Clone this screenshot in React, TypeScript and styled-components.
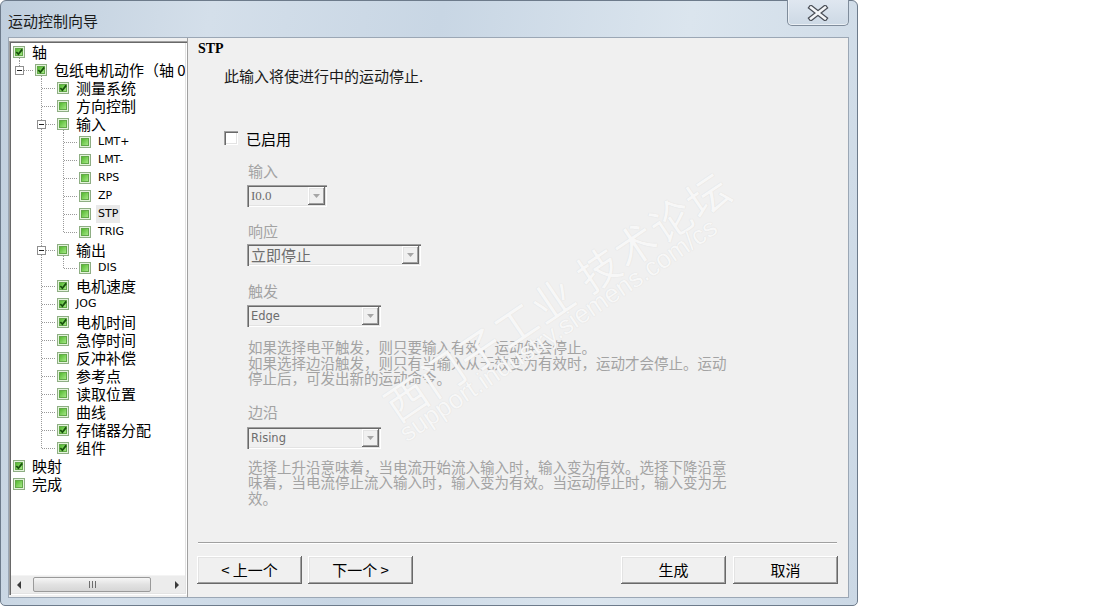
import React from "react";
import styled, { createGlobalStyle } from "styled-components";

const CJK = `"Noto Sans CJK SC", "Liberation Sans", sans-serif`;
const LATIN = `"DejaVu Sans", "Liberation Sans", sans-serif`;

const GlobalStyle = createGlobalStyle`
  html, body { margin: 0; padding: 0; background: #ffffff; }
  body { font-family: ${CJK}; }
  #root { width: 1119px; height: 607px; }
`;

const Page = styled.div`
  width: 1119px;
  height: 607px;
  background: #ffffff;
  display: flex;
  align-items: flex-start;
`;

const Window = styled.div`
  width: 858px;
  height: 606px;
  box-sizing: border-box;
  border: 1px solid #6d7b8b;
  border-radius: 6px 6px 5px 5px;
  background: linear-gradient(100deg, #bfcedd 0%, #d4dfea 22%, #c8d6e4 46%, #dbe5ee 72%, #cbd8e5 100%);
  display: flex;
  flex-direction: column;
  padding: 0 8px 7px 7px;
`;

const TitleBar = styled.div`
  height: 36px;
  display: flex;
  align-items: flex-start;
  flex: none;
`;

const Title = styled.div`
  height: 36px;
  display: flex;
  align-items: center;
  padding-top: 1px;
  font-family: ${CJK};
  font-size: 15px;
  color: #1a1a1a;
`;

const CloseButton = styled.div`
  margin-left: auto;
  margin-top: -1px;
  width: 62px;
  height: 26px;
  box-sizing: border-box;
  border: 1px solid #7f8c9b;
  border-top: none;
  border-radius: 0 0 5px 5px;
  background: linear-gradient(#dfe7f0, #cdd9e5);
  box-shadow: inset 0 -1px 0 rgba(255, 255, 255, 0.6), inset 1px 0 0 rgba(255, 255, 255, 0.5);
  display: flex;
  align-items: center;
  justify-content: center;
`;

const Client = styled.div`
  flex: 1;
  display: flex;
  box-sizing: border-box;
  border: 1px solid #9ba7b5;
  background: #f0f0f0;
  min-height: 0;
`;

const Tree = styled.div`
  width: 178px;
  flex: none;
  box-sizing: border-box;
  margin: 3px 0 2px 0;
  padding: 2px 2px 2px 2px;
  background: #ffffff;
  box-shadow: inset 1px 1px #a0a0a0, inset 2px 2px #696969, inset -1px -1px #ffffff, inset -2px -2px #e3e3e3;
  display: flex;
  flex-direction: column;
  overflow: hidden;
`;

const TreeBody = styled.div`
  flex: 1;
  overflow: hidden;
`;

const Row = styled.div`
  height: 18px;
  display: flex;
  align-items: flex-start;
  white-space: nowrap;
`;

const GuideSvg = styled.svg`
  flex: none;
  display: block;
`;

const NodeLabel = styled.span<{ $latin?: boolean; $selected?: boolean }>`
  height: 18px;
  line-height: 17px;
  font-family: ${(p) => (p.$latin ? LATIN : CJK)};
  font-size: ${(p) => (p.$latin ? "11px" : "15px")};
  color: #000;
  padding: 0 ${(p) => (p.$selected ? "2px" : "0")};
  margin-left: ${(p) => (p.$selected ? "5px" : "7px")};
  background: ${(p) => (p.$selected ? "#e9e9e9" : "transparent")};
`;

const HScroll = styled.div`
  height: 17px;
  flex: none;
  display: flex;
  background: #ececec;
  border-top: 1px solid #f4f4f4;
`;

const ScrollArrow = styled.div`
  width: 17px;
  height: 17px;
  display: flex;
  align-items: center;
  justify-content: center;
  flex: none;
`;

const ScrollTrack = styled.div`
  flex: 1;
  display: flex;
  align-items: center;
`;

const Thumb = styled.div<{ $offset: number; $width: number }>`
  margin-left: ${(p) => p.$offset}px;
  width: ${(p) => p.$width}px;
  height: 15px;
  box-sizing: border-box;
  border: 1px solid #9a9a9a;
  border-radius: 2px;
  background: linear-gradient(#f6f6f6, #e2e2e2 50%, #d6d6d6);
  display: flex;
  align-items: center;
  justify-content: center;
`;

const RightPane = styled.div`
  flex: 1;
  position: relative;
  border-left: 1px solid #a0a0a0;
  display: flex;
  flex-direction: column;
  padding: 3px 11px 0 10px;
  overflow: hidden;
`;

const PageHeader = styled.div`
  font-family: "Liberation Serif", serif;
  font-weight: bold;
  font-size: 14px;
  line-height: 16px;
  color: #000;
`;

const Description = styled.div`
  margin: 10px 0 0 26px;
  font-family: ${CJK};
  font-size: 15px;
  line-height: 18px;
  color: #1a1a1a;
`;

const CheckRow = styled.label`
  margin: 44px 0 0 26px;
  height: 18px;
  display: flex;
  align-items: center;
  gap: 8px;
  font-family: ${CJK};
  font-size: 15px;
  color: #000;
`;

const CheckBox = styled.span`
  width: 14px;
  height: 14px;
  box-sizing: border-box;
  background: #ffffff;
  box-shadow: inset 1px 1px #a0a0a0, inset 2px 2px #696969, inset -1px -1px #ffffff, inset -2px -2px #e3e3e3;
`;

const Fields = styled.div`
  margin-left: 49px;
  display: flex;
  flex-direction: column;
  align-items: flex-start;
`;

const FieldLabel = styled.div<{ $mt: number }>`
  margin: ${(p) => p.$mt}px 0 0 1px;
  font-family: ${CJK};
  font-size: 15px;
  line-height: 18px;
  color: #a3a3a3;
`;

const Combo = styled.div<{ $w: number; $mt: number }>`
  margin-top: ${(p) => p.$mt}px;
  width: ${(p) => p.$w}px;
  height: 22px;
  box-sizing: border-box;
  background: #f0f0f0;
  box-shadow: inset 1px 1px #a0a0a0, inset 2px 2px #696969, inset -1px -1px #ffffff, inset -2px -2px #e3e3e3;
  display: flex;
  align-items: center;
  padding: 2px 2px 2px 4px;
`;

const ComboText = styled.span<{ $kind: "serif" | "sans" | "cjk" }>`
  font-family: ${(p) =>
    p.$kind === "serif" ? `"Liberation Serif", serif` : p.$kind === "sans" ? LATIN : CJK};
  font-size: ${(p) => (p.$kind === "serif" ? "13px" : p.$kind === "sans" ? "11.5px" : "15px")};
  color: #6d6d6d;
  line-height: 18px;
`;

const ComboButton = styled.span`
  margin-left: auto;
  width: 17px;
  height: 18px;
  box-sizing: border-box;
  background: #f0f0f0;
  box-shadow: inset -1px -1px #696969, inset 1px 1px #ffffff, inset -2px -2px #a0a0a0, inset 2px 2px #e3e3e3;
  display: flex;
  align-items: center;
  justify-content: center;
`;

const Note = styled.div<{ $mt: number }>`
  margin: ${(p) => p.$mt}px 0 0 1px;
  font-family: ${CJK};
  font-size: 14.5px;
  line-height: 15.5px;
  color: #a3a3a3;
  white-space: nowrap;
`;

const Separator = styled.div`
  margin-top: auto;
  height: 0;
  border-top: 1px solid #a0a0a0;
  border-bottom: 1px solid #ffffff;
`;

const ButtonRow = styled.div`
  margin: 12px -1px 13px -1px;
  display: flex;
  justify-content: space-between;
`;

const ButtonGroup = styled.div<{ $gap: number }>`
  display: flex;
  gap: ${(p) => p.$gap}px;
`;

const Button = styled.button`
  width: 105px;
  height: 28px;
  box-sizing: border-box;
  border: none;
  padding: 0;
  background: #f0f0f0;
  box-shadow: inset -1px -1px #696969, inset 1px 1px #ffffff, inset -2px -2px #a0a0a0, inset 2px 2px #e3e3e3;
  font-family: ${CJK};
  font-size: 15px;
  color: #000;
  line-height: 26px;
`;

const Watermark = styled.div<{ $size: number; $angle: number }>`
  position: absolute;
  white-space: nowrap;
  pointer-events: none;
  transform-origin: 0 50%;
  transform: rotate(${(p) => p.$angle}deg);
  font-size: ${(p) => p.$size}px;
  line-height: ${(p) => p.$size}px;
  color: #f7f7f7;
  text-shadow: 0 0 1px #d6d6d6;
`;

const WatermarkCJK = styled(Watermark)`
  font-family: ${CJK};
  letter-spacing: 2px;
`;

const WatermarkURL = styled(Watermark)`
  font-family: "Liberation Sans", sans-serif;
`;

type Guide = "none" | "pipe" | "tee" | "ell";

interface TreeNode {
  label: string;
  checked?: boolean;
  guides: Guide[];
  expander?: boolean;
  parent?: boolean;
  latin?: boolean;
  selected?: boolean;
}

const T2: Guide[] = ["none", "tee"];
const E2: Guide[] = ["none", "ell"];
const T3: Guide[] = ["none", "pipe", "tee"];
const E3: Guide[] = ["none", "pipe", "ell"];

const nodes: TreeNode[] = [
  { label: "轴", checked: true, guides: [], parent: true },
  { label: "包纸电机动作（轴 0）", checked: true, guides: ["ell"], expander: true, parent: true },
  { label: "测量系统", checked: true, guides: T2 },
  { label: "方向控制", guides: T2 },
  { label: "输入", guides: T2, expander: true, parent: true },
  { label: "LMT+", guides: T3, latin: true },
  { label: "LMT-", guides: T3, latin: true },
  { label: "RPS", guides: T3, latin: true },
  { label: "ZP", guides: T3, latin: true },
  { label: "STP", guides: T3, latin: true, selected: true },
  { label: "TRIG", guides: E3, latin: true },
  { label: "输出", guides: T2, expander: true, parent: true },
  { label: "DIS", guides: E3, latin: true },
  { label: "电机速度", checked: true, guides: T2 },
  { label: "JOG", checked: true, guides: T2, latin: true },
  { label: "电机时间", checked: true, guides: T2 },
  { label: "急停时间", guides: T2 },
  { label: "反冲补偿", guides: T2 },
  { label: "参考点", guides: T2 },
  { label: "读取位置", guides: T2 },
  { label: "曲线", guides: T2 },
  { label: "存储器分配", checked: true, guides: T2 },
  { label: "组件", checked: true, guides: E2 },
  { label: "映射", checked: true, guides: [] },
  { label: "完成", guides: [] },
];

const DOT = "#9a9a9a";

function GuideCell({ kind, expander }: { kind: Guide; expander?: boolean }) {
  return (
    <GuideSvg width={22} height={18} viewBox="0 0 22 18" shapeRendering="crispEdges">
      {(kind === "pipe" || kind === "tee") && (
        <line x1={8.5} y1={0} x2={8.5} y2={18} stroke={DOT} strokeDasharray="1 1" />
      )}
      {kind === "ell" && <line x1={8.5} y1={0} x2={8.5} y2={10} stroke={DOT} strokeDasharray="1 1" />}
      {(kind === "tee" || kind === "ell") && (
        <line x1={9} y1={9.5} x2={22} y2={9.5} stroke={DOT} strokeDasharray="1 1" />
      )}
      {expander && (
        <g>
          <rect x={4.5} y={5.5} width={8} height={8} fill="#ffffff" stroke="#8f8f8f" />
          <line x1={6} y1={9.5} x2={11} y2={9.5} stroke="#222" />
        </g>
      )}
    </GuideSvg>
  );
}

function NodeIcon({ checked, parent }: { checked?: boolean; parent?: boolean }) {
  return (
    <GuideSvg width={14} height={18} viewBox="0 0 14 18" style={{ marginLeft: 2, marginRight: -2 }}>
      <defs>
        <linearGradient id="ng" x1="0" y1="0" x2="1" y2="1">
          <stop offset="0" stopColor="#4fb52a" />
          <stop offset="1" stopColor="#a9eb8b" />
        </linearGradient>
      </defs>
      {parent && (
        <line x1={6.5} y1={15} x2={6.5} y2={18} stroke={DOT} strokeDasharray="1 1" shapeRendering="crispEdges" />
      )}
      <rect x={0.5} y={3.5} width={11} height={11} fill="#e4f3dc" stroke="#8fae84" shapeRendering="crispEdges" />
      <rect x={2.5} y={5.5} width={7} height={7} fill="url(#ng)" stroke="#62a848" shapeRendering="crispEdges" />
      {checked && (
        <path d="M3.3 9 L5.4 11.2 L9.2 6.4" fill="none" stroke="#17510c" strokeWidth={1.8} />
      )}
    </GuideSvg>
  );
}

function TreeRow({ node }: { node: TreeNode }) {
  const last = node.guides.length - 1;
  return (
    <Row>
      {node.guides.map((g, i) => (
        <GuideCell key={i} kind={g} expander={node.expander && i === last} />
      ))}
      <NodeIcon checked={node.checked} parent={node.parent} />
      <NodeLabel $latin={node.latin} $selected={node.selected}>
        {node.label}
      </NodeLabel>
    </Row>
  );
}

function ArrowIcon({ dir }: { dir: "left" | "right" }) {
  return (
    <svg width={5} height={8} viewBox="0 0 5 8">
      {dir === "left" ? <path d="M4 0 L0 4 L4 8 Z" fill="#3a3a3a" /> : <path d="M1 0 L5 4 L1 8 Z" fill="#3a3a3a" />}
    </svg>
  );
}

function Grip() {
  return (
    <svg width={8} height={7} viewBox="0 0 8 7" shapeRendering="crispEdges">
      <line x1={1.5} y1={0} x2={1.5} y2={7} stroke="#6e6e6e" />
      <line x1={4.5} y1={0} x2={4.5} y2={7} stroke="#6e6e6e" />
      <line x1={7.5} y1={0} x2={7.5} y2={7} stroke="#6e6e6e" />
    </svg>
  );
}

function DropArrow() {
  return (
    <svg width={7} height={4} viewBox="0 0 7 4">
      <path d="M0 0 H7 L3.5 4 Z" fill="#a6a6a6" />
    </svg>
  );
}

function CloseGlyph() {
  return (
    <svg width={22} height={16} viewBox="0 0 22 16">
      <path d="M4 2.5 L18 13.5 M18 2.5 L4 13.5" stroke="#4a4f57" strokeWidth={5} strokeLinecap="square" />
      <path d="M4 2.5 L18 13.5 M18 2.5 L4 13.5" stroke="#f4f6f8" strokeWidth={2.6} strokeLinecap="square" />
    </svg>
  );
}

function ComboBox({ w, mt, text, kind }: { w: number; mt: number; text: string; kind: "serif" | "sans" | "cjk" }) {
  return (
    <Combo $w={w} $mt={mt}>
      <ComboText $kind={kind}>{text}</ComboText>
      <ComboButton>
        <DropArrow />
      </ComboButton>
    </Combo>
  );
}

export default function App() {
  return (
    <Page>
      <GlobalStyle />
      <Window>
        <TitleBar>
          <Title>运动控制向导</Title>
          <CloseButton>
            <CloseGlyph />
          </CloseButton>
        </TitleBar>
        <Client>
          <Tree>
            <TreeBody>
              {nodes.map((n, i) => (
                <TreeRow key={i} node={n} />
              ))}
            </TreeBody>
            <HScroll>
              <ScrollArrow>
                <ArrowIcon dir="left" />
              </ScrollArrow>
              <ScrollTrack>
                <Thumb $offset={5} $width={118}>
                  <Grip />
                </Thumb>
              </ScrollTrack>
              <ScrollArrow>
                <ArrowIcon dir="right" />
              </ScrollArrow>
            </HScroll>
          </Tree>
          <RightPane>
            <WatermarkCJK $size={42} $angle={-34} style={{ left: 200, top: 350 }}>
              西门子工业 技术论坛
            </WatermarkCJK>
            <WatermarkURL $size={26} $angle={-34} style={{ left: 214, top: 384 }}>
              support.industry.siemens.com/cs
            </WatermarkURL>
            <PageHeader>STP</PageHeader>
            <Description>此输入将使进行中的运动停止.</Description>
            <CheckRow>
              <CheckBox />
              已启用
            </CheckRow>
            <Fields>
              <FieldLabel $mt={15}>输入</FieldLabel>
              <ComboBox w={80} mt={5} text="I0.0" kind="serif" />
              <FieldLabel $mt={15}>响应</FieldLabel>
              <ComboBox w={174} mt={4} text="立即停止" kind="cjk" />
              <FieldLabel $mt={16}>触发</FieldLabel>
              <ComboBox w={134} mt={5} text="Edge" kind="sans" />
              <Note $mt={12}>
                如果选择电平触发，则只要输入有效，运动便会停止。
                <br />
                如果选择边沿触发，则只有当输入从无效变为有效时，运动才会停止。运动
                <br />
                停止后，可发出新的运动命令。
              </Note>
              <FieldLabel $mt={17}>边沿</FieldLabel>
              <ComboBox w={134} mt={6} text="Rising" kind="sans" />
              <Note $mt={10}>
                选择上升沿意味着，当电流开始流入输入时，输入变为有效。选择下降沿意
                <br />
                味着，当电流停止流入输入时，输入变为有效。当运动停止时，输入变为无
                <br />
                效。
              </Note>
            </Fields>
            <Separator />
            <ButtonRow>
              <ButtonGroup $gap={6}>
                <Button>&lt; 上一个</Button>
                <Button>下一个 &gt;</Button>
              </ButtonGroup>
              <ButtonGroup $gap={7}>
                <Button>生成</Button>
                <Button>取消</Button>
              </ButtonGroup>
            </ButtonRow>
          </RightPane>
        </Client>
      </Window>
    </Page>
  );
}
